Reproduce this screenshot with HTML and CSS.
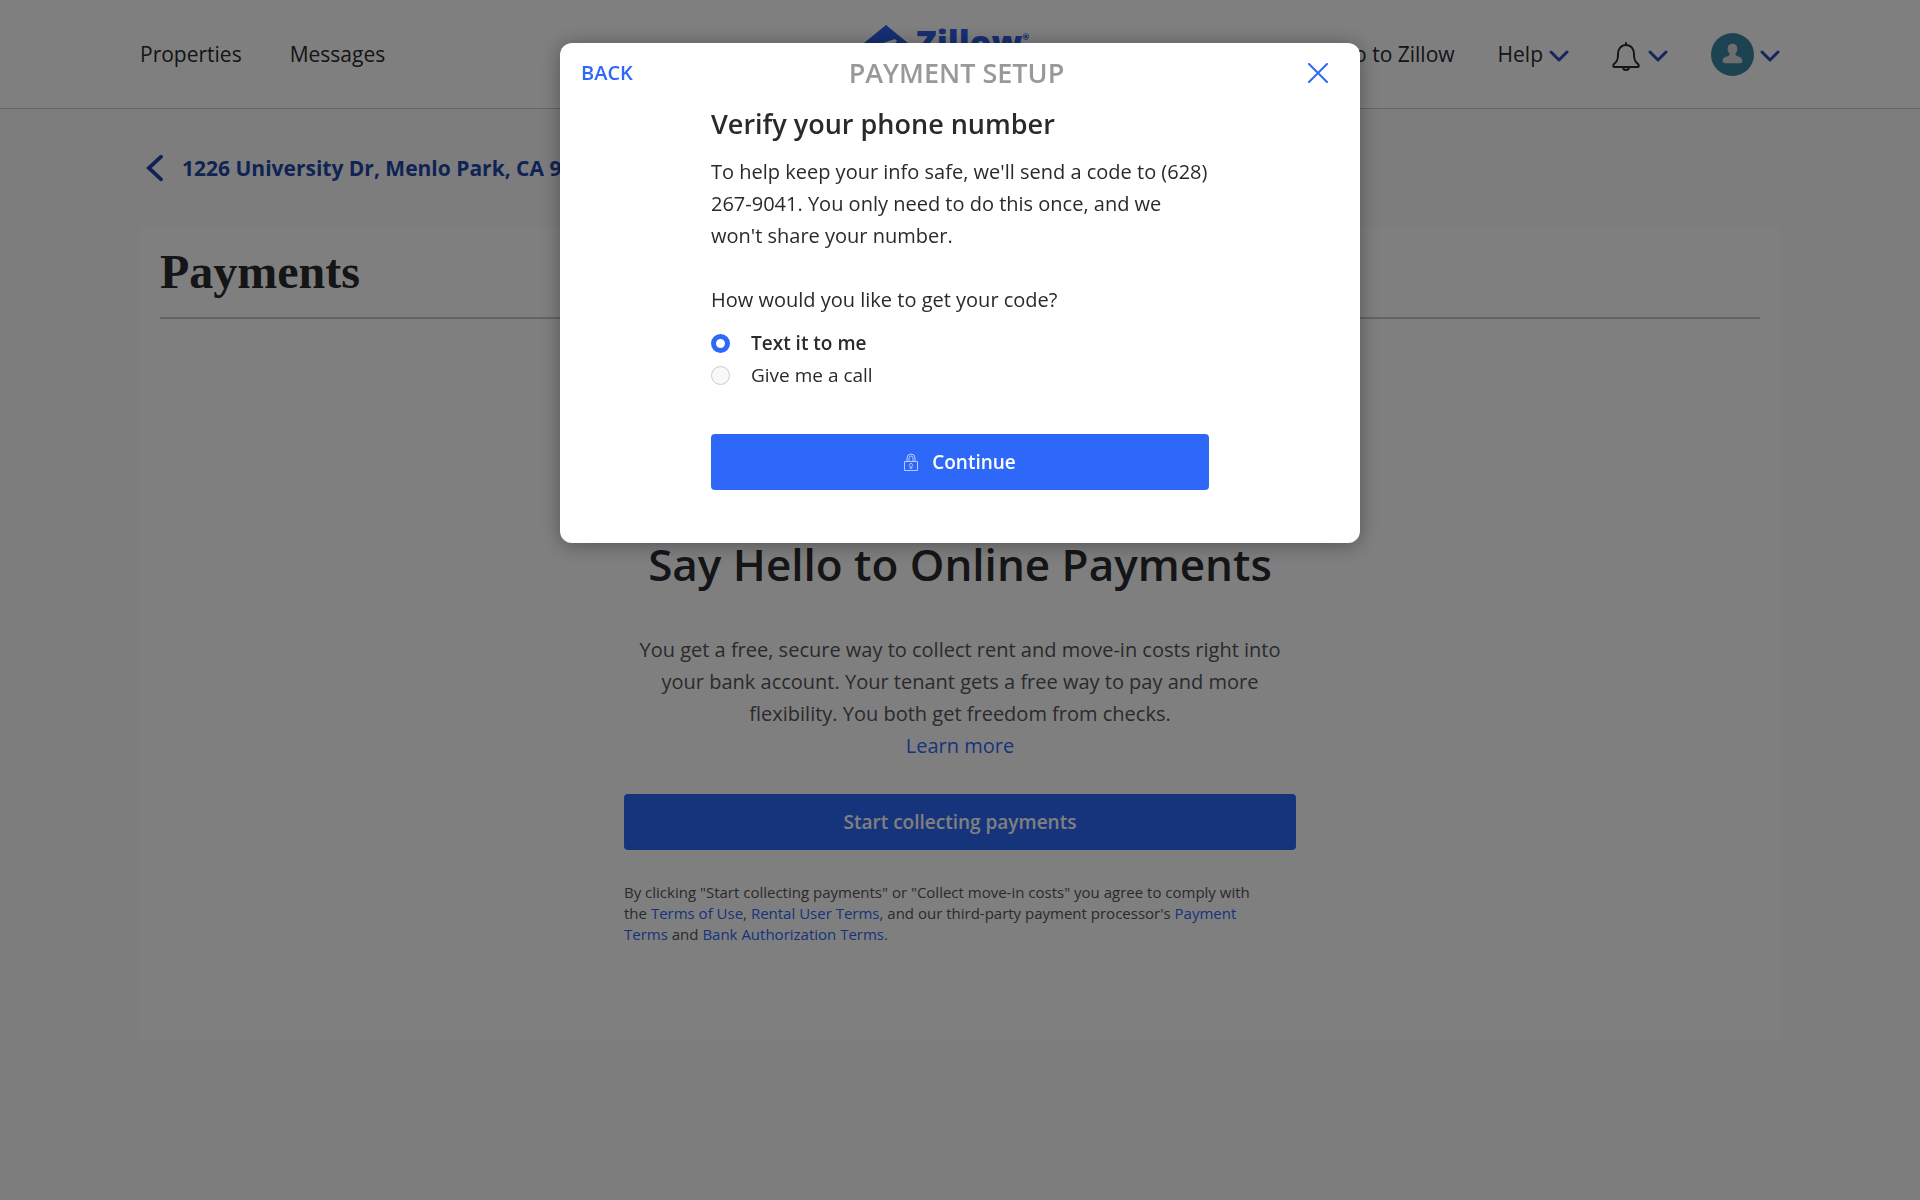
FILE: index.html
```html
<!DOCTYPE html>
<html lang="en">
<head>
<meta charset="utf-8">
<meta name="viewport" content="width=device-width, initial-scale=1">
<title>Payments</title>
<link rel="stylesheet" href="styles.css">
</head>
<body>
<header class="site-header">
  <div class="container header-grid">
    <nav class="nav">
      <a href="#">Properties</a>
      <a href="#">Messages</a>
    </nav>
    <a href="#" class="logo">
      <svg class="logo-mark" viewBox="0 0 44 58" aria-hidden="true">
        <path d="M22 0L44 18v10c-7-3-13-3-19 0 2-5 5-9 8-12-1-2-3-2-5-1C18 18 8 23 0 29V18z"/>
        <path d="M0 58V38c8 4 16 2 24-4 6-3 13-3 20-1v25z"/>
      </svg>
      <span class="logo-text">Zillow</span><span class="logo-reg">®</span>
    </a>
    <nav class="nav nav-right">
      <a href="#">Go to Zillow</a>
      <a href="#" class="menu">Help
        <svg class="chevron" viewBox="0 0 20 12" aria-hidden="true"><path d="M2 2l8 8 8-8"/></svg>
      </a>
      <a href="#" class="menu" aria-label="Notifications">
        <svg class="bell" viewBox="0 0 28 30" aria-hidden="true"><path d="M14 1v2M14 3c-5 0-8 4-8 9 0 6-1 8-4 10-1 1-1 3 0 3h24c1 0 1-2 0-3-3-2-4-4-4-10 0-5-3-9-8-9zM11 25a3 3 0 0 0 6 0"/></svg>
        <svg class="chevron" viewBox="0 0 20 12" aria-hidden="true"><path d="M2 2l8 8 8-8"/></svg>
      </a>
      <a href="#" class="menu" aria-label="Account">
        <svg class="avatar" viewBox="0 0 44 44" aria-hidden="true"><circle class="avatar-disc" cx="22" cy="22" r="22"/><path class="avatar-person" d="M22 11c-3 0-5 2-5 5 0 2 1 4 2 5v1c0 2-7 2-7 6v1c0 1 1 2 2 2h16c1 0 2-1 2-2v-1c0-4-7-4-7-6v-1c1-1 2-3 2-5 0-3-2-5-5-5z"/></svg>
        <svg class="chevron" viewBox="0 0 20 12" aria-hidden="true"><path d="M2 2l8 8 8-8"/></svg>
      </a>
    </nav>
  </div>
</header>

<main class="container">
  <a href="#" class="address">
    <svg class="back-arrow" viewBox="0 0 18 28" aria-hidden="true"><path d="M16 2L3 14l13 12"/></svg>
    1226 University Dr, Menlo Park, CA 94025
  </a>
  <section class="card">
    <h1 class="card-title">Payments</h1>
    <div class="intro">
      <h2 class="intro-title">Say Hello to Online Payments</h2>
      <p class="intro-text">You get a free, secure way to collect rent and move-in costs right into your bank account. Your tenant gets a free way to pay and more flexibility. You both get freedom from checks.<br><a href="#">Learn more</a></p>
      <button type="button" class="button">Start collecting payments</button>
      <p class="legal">By clicking "Start collecting payments" or "Collect move-in costs" you agree to comply with the <a href="#">Terms of Use</a>, <a href="#">Rental User Terms</a>, and our third-party payment processor's <a href="#">Payment Terms</a> and <a href="#">Bank Authorization Terms.</a></p>
    </div>
  </section>
</main>

<div class="overlay">
  <div class="modal" role="dialog" aria-modal="true" aria-labelledby="modal-title">
    <div class="modal-bar">
      <button type="button" class="modal-back">BACK</button>
      <h2 class="modal-title" id="modal-title">PAYMENT SETUP</h2>
      <button type="button" class="modal-close" aria-label="Close">
        <svg class="close-icon" viewBox="0 0 20 20" aria-hidden="true"><path d="M1 1l18 18M19 1L1 19"/></svg>
      </button>
    </div>
    <form class="modal-body">
      <h3 class="modal-heading">Verify your phone number</h3>
      <p class="modal-text">To help keep your info safe, we'll send a code to (628) 267-9041. You only need to do this once, and we won't share your number.</p>
      <fieldset class="choices">
        <legend class="modal-text">How would you like to get your code?</legend>
        <label class="choice"><input type="radio" name="method" checked><span>Text it to me</span></label>
        <label class="choice"><input type="radio" name="method"><span>Give me a call</span></label>
      </fieldset>
      <button type="button" class="button">
        <svg class="lock" viewBox="0 0 14 18" aria-hidden="true"><path d="M.5 8.500h13v9H.5zM3 8V5a4 4 0 0 1 8 0v3M5 8V5a2 2 0 0 1 4 0v3M7 10.500a1.500 1.500 0 0 1 .8 2.800v2H6.200v-2A1.500 1.500 0 0 1 7 10.500z"/></svg>
        Continue
      </button>
    </form>
  </div>
</div>
</body>
</html>
```
FILE: styles.css
```css
* { box-sizing: border-box; }

body {
  margin: 0;
  min-height: 100vh;
  background: #fbfbfb;
  color: #2a2a2e;
  font-family: "Open Sans", "Noto Sans", sans-serif;
  font-size: 20px;
  line-height: 32px;
}

h1, h2, h3, p { margin: 0; }
a { color: #2d68f8; text-decoration: none; }
button { font: inherit; cursor: pointer; }
svg { display: block; flex: none; }

.container {
  max-width: 1688px;
  margin: 0 auto;
  padding: 0 24px;
}

/* Header */
.site-header {
  background: #fff;
  border-bottom: 1px solid #c8c8c8;
}
.header-grid {
  display: grid;
  grid-template-columns: 1fr 192px 1fr;
  align-items: center;
  height: 108px;
}
.nav {
  display: flex;
  align-items: center;
  gap: 48px;
  font-size: 21px;
}
.nav a { color: #2a2a2e; }
.nav-right { justify-content: flex-end; gap: 43px; }
.menu {
  display: flex;
  align-items: center;
  gap: 6px;
}
.chevron {
  width: 20px;
  height: 12px;
  margin-top: 4px;
  fill: none;
  stroke: #2850c0;
  stroke-width: 3;
  stroke-linecap: round;
  stroke-linejoin: round;
}
.bell {
  width: 28px;
  height: 30px;
  margin: 6px 2px 0 0;
  fill: none;
  stroke: #2a2a2e;
  stroke-width: 2;
  stroke-linecap: round;
  stroke-linejoin: round;
}
.avatar { width: 43px; height: 43px; }
.avatar-disc { fill: #3a86a4; }
.avatar-person { fill: #ddd; }

.logo {
  display: flex;
  align-items: flex-start;
  gap: 8px;
  color: #2d5fe8;
  font-weight: 800;
}
.logo-mark { width: 44px; height: 58px; fill: #2d5fe8; }
.logo-text { font-size: 34px; line-height: 34px; }
.logo-reg { margin-left: -8px; font-size: 8px; line-height: 24px; }

/* Page */
.address {
  display: inline-flex;
  align-items: center;
  gap: 19px;
  padding: 43px 0 43px 6px;
  color: #1f47a8;
  font-size: 21px;
  font-weight: 700;
}
.back-arrow {
  width: 17px;
  height: 28px;
  fill: none;
  stroke: #1f47a8;
  stroke-width: 4;
  stroke-linecap: round;
}
.card {
  padding: 0 20px 96px;
  background: #fff;
}
.card-title {
  padding: 13px 0;
  border-bottom: 2px solid #c8c8c8;
  font-family: "Liberation Serif", serif;
  font-size: 48px;
  font-weight: 700;
  line-height: 64px;
}
.intro {
  max-width: 672px;
  margin: 0 auto;
  padding-top: 213px;
}
.intro-title {
  margin-bottom: 38px;
  font-size: 44px;
  font-weight: 600;
  line-height: 64px;
  text-align: center;
}
.intro-text {
  margin-bottom: 32px;
  color: #55555c;
  text-align: center;
}
.legal {
  max-width: 640px;
  margin-top: 32px;
  color: #55555c;
  font-size: 15px;
  line-height: 21px;
}

.button {
  display: flex;
  align-items: center;
  justify-content: center;
  gap: 14px;
  width: 100%;
  height: 56px;
  padding: 0;
  border: 0;
  border-radius: 4px;
  background: #2d68f8;
  color: #fff;
  font-size: 19px;
  font-weight: 600;
}
.lock {
  width: 14px;
  height: 18px;
  fill: none;
  stroke: #b4caff;
  stroke-width: 1;
}

/* Dialog */
.overlay {
  position: fixed;
  inset: 0;
  padding: 43px 16px;
  background: rgba(0, 0, 0, 0.5);
  overflow: auto;
}
.modal {
  max-width: 800px;
  margin: 0 auto;
  padding-bottom: 53px;
  border-radius: 12px;
  background: #fff;
  box-shadow: 0 2px 20px rgba(0, 0, 0, 0.35);
}
.modal-bar {
  display: flex;
  align-items: center;
  justify-content: space-between;
  height: 60px;
  padding: 0 32px 0 21px;
}
.modal-back {
  padding: 0;
  border: 0;
  background: none;
  color: #2d68f8;
  font-size: 20px;
  font-weight: 600;
}
.modal-title {
  color: #999;
  font-size: 27px;
  font-weight: 600;
}
.modal-close {
  display: flex;
  justify-content: flex-end;
  width: 48px;
  padding: 0;
  border: 0;
  background: none;
}
.close-icon {
  width: 20px;
  height: 20px;
  fill: none;
  stroke: #2d68f8;
  stroke-width: 2;
  stroke-linecap: round;
}
.modal-body { padding: 0 151px; }
.modal-heading {
  padding: 1px 0 12px;
  font-size: 27px;
  font-weight: 600;
  line-height: 40px;
}
.modal-text { padding: 0; }
.choices {
  margin: 32px 0 43px;
  padding: 0;
  border: 0;
}
.choices legend { margin-bottom: 11px; }
.choice {
  display: flex;
  align-items: center;
  gap: 21px;
  font-size: 19px;
}
.choice input {
  width: 19px;
  height: 19px;
  margin: 0;
  appearance: none;
  border: 1px solid #ccc;
  border-radius: 50%;
  background: #f8f8f8;
}
.choice input:checked {
  border: 5px solid #2d68f8;
  background: #fff;
}
.choice input:checked + span { font-weight: 600; }
```
